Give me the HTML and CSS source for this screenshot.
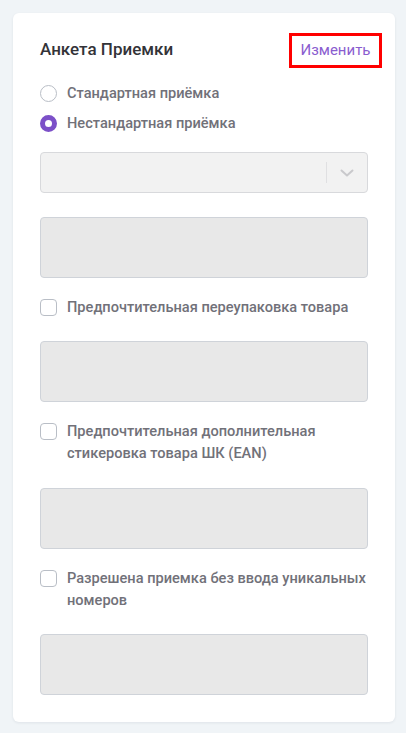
FILE: index.html
```html
<!DOCTYPE html>
<html lang="ru">
<head>
<meta charset="utf-8">
<link rel="stylesheet" href="styles.css">
</head>
<body>
<div class="card">
  <div class="header">
    <div class="title">Анкета Приемки</div>
    <button class="edit">Изменить</button>
  </div>
  <div class="radios">
    <label class="radio"><span class="circle"></span><span>Стандартная приёмка</span></label>
    <label class="radio"><span class="circle checked"></span><span>Нестандартная приёмка</span></label>
  </div>
  <div class="select">
    <span class="sep"></span>
    <svg class="chev" width="14" height="8" viewBox="0 0 14 8"><path d="M1.5 1.5 L7 6.5 L12.5 1.5" fill="none" stroke="#c9c9cc" stroke-width="2" stroke-linecap="round" stroke-linejoin="round"/></svg>
  </div>
  <div class="area first"></div>
  <label class="check"><span class="box"></span><span>Предпочтительная переупаковка товара</span></label>
  <div class="area"></div>
  <label class="check"><span class="box"></span><span>Предпочтительная дополнительная стикеровка товара ШК (EAN)</span></label>
  <div class="area third"></div>
  <label class="check"><span class="box"></span><span>Разрешена приемка без ввода уникальных номеров</span></label>
  <div class="area last"></div>
</div>
</body>
</html>
```
FILE: styles.css
```css
* { box-sizing: border-box; }
body {
  margin: 0;
  padding: 13px 11px 11px 13px;
  background: #f0f4f7;
  font-family: Roboto, "Noto Sans", sans-serif;
}
.card {
  width: 382px;
  background: #fff;
  border-radius: 6px;
  box-shadow: 0 1px 3px rgba(30, 40, 60, 0.08);
  padding: 20px 27px 27px;
}
.header {
  display: flex;
  justify-content: space-between;
  align-items: center;
  height: 35px;
  margin-right: -14px;
}
.title {
  font-size: 17px;
  font-weight: 500;
  color: #333338;
  margin-top: -4px;
}
.edit {
  height: 35px;
  width: 93px;
  border: 3px solid #ff0000;
  background: #fff;
  color: #8a5dcf;
  font-family: Roboto, sans-serif;
  font-size: 15px;
  padding: 0 0 2px;
  text-align: center;
}
.radios {
  margin-top: 15px;
  display: flex;
  flex-direction: column;
  gap: 10px;
}
.radio, .check {
  display: flex;
  gap: 10px;
  font-size: 14.6px;
  font-weight: 500;
  color: #717179;
}
.radio {
  align-items: center;
  line-height: 20px;
}
.circle {
  width: 17px;
  height: 17px;
  border-radius: 50%;
  border: 1px solid #b9bec6;
  flex: none;
}
.circle.checked {
  border: 5.5px solid #7c50c8;
  background: #fff;
}
.select {
  margin-top: 19px;
  height: 41px;
  background: #f2f2f2;
  border: 1px solid #d8d9dc;
  border-radius: 4px;
  display: flex;
  align-items: center;
  justify-content: flex-end;
  padding-right: 13px;
}
.sep {
  width: 1px;
  height: 21px;
  background: #e0e0e2;
  margin-right: 13px;
}
.chev { display: block; }
.area {
  height: 61px;
  background: #e8e8e8;
  border: 1px solid #cfd3d9;
  border-radius: 4px;
  margin: 23px 0 18px;
}
.area.first { margin-top: 24px; }
.area.third { margin-top: 24px; }
.area.last { margin-bottom: 0; margin-top: 23px; }
.check {
  line-height: 22px;
  align-items: flex-start;
}
.box {
  width: 17px;
  height: 17px;
  border: 1px solid #b9bec6;
  border-radius: 4px;
  flex: none;
  margin-top: 3px;
}
```
